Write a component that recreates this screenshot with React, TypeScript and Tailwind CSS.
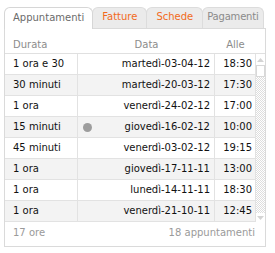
const rows = [
  { durata: '1 ora e 30', data: 'martedì-03-04-12', alle: '18:30' },
  { durata: '30 minuti', data: 'martedì-20-03-12', alle: '17:30' },
  { durata: '1 ora', data: 'venerdì-24-02-12', alle: '17:00' },
  { durata: '15 minuti', data: 'giovedì-16-02-12', alle: '10:00', dot: true },
  { durata: '45 minuti', data: 'venerdì-03-02-12', alle: '19:15' },
  { durata: '1 ora', data: 'giovedì-17-11-11', alle: '13:00' },
  { durata: '1 ora', data: 'lunedì-14-11-11', alle: '18:30' },
  { durata: '1 ora', data: 'venerdì-21-10-11', alle: '12:45' },
];

const tabs = [
  { label: 'Fatture', cls: 'px-[9px] text-[#f26a1b]' },
  { label: 'Schede', cls: 'px-[9px] text-[#f26a1b]' },
  { label: 'Pagamenti', cls: 'px-[4px] tracking-[-0.2px] text-[#8a8a8a]' },
];

export default function App() {
  return (
    <div className="w-[275px] h-[253px] bg-white pt-[7px] pl-[4px] font-['DejaVu_Sans',sans-serif] text-[10px] leading-none">
      {/* tabs */}
      <div className="flex h-[21px] items-stretch">
        <div className="relative z-10 -mb-px flex shrink-0 items-center rounded-t-[6px] border border-b-0 border-[#d6d6d6] bg-white px-[8px] pb-[2px] text-[#6b6b6b]">
          Appuntamenti
        </div>
        {tabs.map((t) => (
          <div
            key={t.label}
            className={`-ml-px flex shrink-0 items-center rounded-t-[6px] border border-b-0 border-[#dcdcdc] bg-[#ebebeb] pb-[2px] ${t.cls}`}
          >
            {t.label}
          </div>
        ))}
      </div>

      {/* panel */}
      <div className="w-[262px] h-[219px] border border-[#dadada] bg-white flex flex-col">
        <div className="flex h-[25px] items-end pb-[3px] border-b border-[#e0e0e0] text-[#8c8c8c]">
          <div className="w-[73px] pl-[8px]">Durata</div>
          <div className="w-[137px] text-center">Data</div>
          <div className="w-[41px] text-center">Alle</div>
        </div>

        <div className="flex">
          <div className="w-[250px]">
            {rows.map((r, i) => (
              <div
                key={i}
                className={`flex h-[21px] border-b border-[#e2e2e2] text-[#111] ${i % 2 === 1 ? 'bg-[#f3f3f3]' : 'bg-white'}`}
              >
                <div className="w-[73px] flex items-center pl-[8px] border-r border-[#e2e2e2]">{r.durata}</div>
                <div className="w-[137px] flex items-center justify-end pr-[4px] border-r border-[#e2e2e2]">
                  {r.dot && <span className="mr-auto ml-[5px] w-[9px] h-[9px] rounded-full bg-[#9d9d9d]" />}
                  {r.data}
                </div>
                <div className="flex-1 flex items-center justify-end pr-[3px]">{r.alle}</div>
              </div>
            ))}
          </div>

          {/* scrollbar */}
          <div className="w-[10px] h-[168px] border-l border-[#e2e2e2] flex flex-col bg-white">
            <div className="h-[11px] flex items-center justify-center">
              <svg width="7" height="4" viewBox="0 0 7 4">
                <path d="M0 4 L3.5 0 L7 4 Z" fill="#d4d4d4" />
              </svg>
            </div>
            <div className="h-[12px] border border-[#d8d8d8] bg-white" />
            <div className="flex-1 bg-[repeating-conic-gradient(#dedede_0_25%,#ffffff_0_50%)] bg-[length:2px_2px]" />
            <div className="h-[9px] flex items-center justify-center">
              <svg width="7" height="4" viewBox="0 0 7 4">
                <path d="M0 0 L3.5 4 L7 0 Z" fill="#d4d4d4" />
              </svg>
            </div>
          </div>
        </div>

        <div className="flex flex-1 items-center justify-between pl-[8px] pr-[10px] pb-[2px] text-[#9a9a9a]">
          <span>17 ore</span>
          <span>18 appuntamenti</span>
        </div>
      </div>
    </div>
  );
}
